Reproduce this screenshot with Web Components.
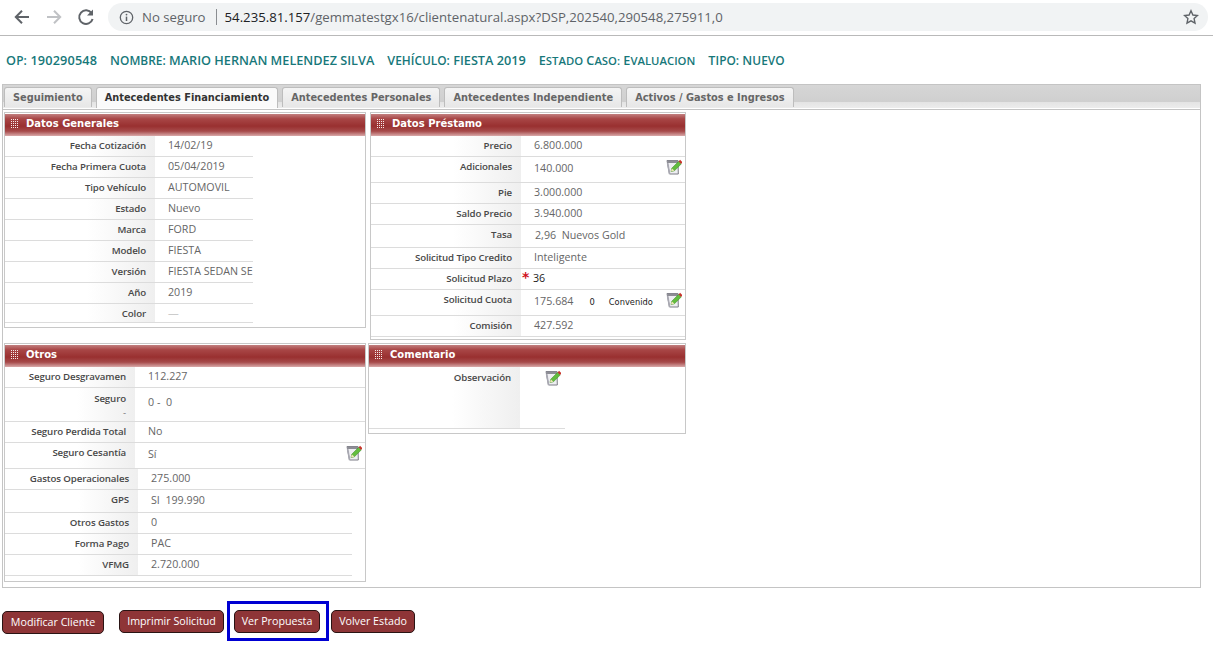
<!DOCTYPE html>
<html>
<head>
<meta charset="utf-8">
<title>Cliente natural</title>
<style>
  html, body { margin: 0; background: #fff; }
  body { font-family: "Open Sans", "Liberation Sans", sans-serif; }
</style>
</head>
<body>
<browser-bar></browser-bar>
<case-header></case-header>
<tab-box>
  <tab-item>Seguimiento</tab-item>
  <tab-item active>Antecedentes Financiamiento</tab-item>
  <tab-item>Antecedentes Personales</tab-item>
  <tab-item>Antecedentes Independiente</tab-item>
  <tab-item>Activos / Gastos e Ingresos</tab-item>

  <data-panel slot="panels" heading="Datos Generales" style="width:362px;height:216px;--label-w:150px;--line-w:248px">
    <data-row label="Fecha Cotización">14/02/19</data-row>
    <data-row label="Fecha Primera Cuota">05/04/2019</data-row>
    <data-row label="Tipo Vehículo">AUTOMOVIL</data-row>
    <data-row label="Estado">Nuevo</data-row>
    <data-row label="Marca">FORD</data-row>
    <data-row label="Modelo">FIESTA</data-row>
    <data-row label="Versión">FIESTA SEDAN SE</data-row>
    <data-row label="Año">2019</data-row>
    <data-row label="Color" h="19"><span style="color:#ccc">—</span></data-row>
  </data-panel>

  <data-panel slot="panels" heading="Datos Préstamo" style="width:316px;height:228px;--label-w:150px">
    <data-row label="Precio">6.800.000</data-row>
    <data-row label="Adicionales" h="26" edit>140.000</data-row>
    <data-row label="Pie">3.000.000</data-row>
    <data-row label="Saldo Precio">3.940.000</data-row>
    <data-row label="Tasa" h="23"><span style="margin-left:1px;white-space:pre">2,96  Nuevos Gold</span></data-row>
    <data-row label="Solicitud Tipo Credito">Inteligente</data-row>
    <data-row label="Solicitud Plazo" required><span style="color:#222;margin-left:-1px">36</span></data-row>
    <data-row label="Solicitud Cuota" h="26" edit>175.684 <small-note style="margin-left:16px">0</small-note><small-note style="margin-left:14px">Convenido</small-note></data-row>
    <data-row label="Comisión">427.592</data-row>
  </data-panel>

  <data-panel slot="panels" heading="Otros" style="width:362px;height:239px;--label-w:130px">
    <data-row label="Seguro Desgravamen">112.227</data-row>
    <data-row label="Seguro" sub="-" h="34" style="--label-top:4px">0 -&nbsp; 0</data-row>
    <data-row label="Seguro Perdida Total">No</data-row>
    <data-row label="Seguro Cesantía" h="26" edit>Sí</data-row>
    <data-row label="Gastos Operacionales" style="--label-w:133px;--line-w:347px">275.000</data-row>
    <data-row label="GPS" h="23" style="--label-w:133px;--line-w:347px">SI&nbsp; 199.990</data-row>
    <data-row label="Otros Gastos" style="--label-w:133px;--line-w:347px">0</data-row>
    <data-row label="Forma Pago" style="--label-w:133px;--line-w:347px">PAC</data-row>
    <data-row label="VFMG" style="--label-w:133px;--line-w:347px">2.720.000</data-row>
  </data-panel>

  <data-panel slot="panels" heading="Comentario" style="width:318px;height:91px;margin-left:-2px;--label-w:151px;--line-w:196px">
    <data-row label="Observación" h="62" top style="--label-top:4px"><edit-icon style="margin-left:12px;margin-top:1px"></edit-icon></data-row>
  </data-panel>
</tab-box>
<action-bar>
  <action-button style="margin-top:1px;width:102px">Modificar Cliente</action-button>
  <action-button style="margin-left:15px;width:105px">Imprimir Solicitud</action-button>
  <marked-box><action-button style="width:86px">Ver Propuesta</action-button></marked-box>
  <action-button style="margin-left:2px;width:84px">Volver Estado</action-button>
</action-bar>

<script>
class BrowserBar extends HTMLElement {
  constructor() {
    super();
    this.attachShadow({ mode: "open" });
    this.shadowRoot.innerHTML = `
      <style>
        :host { display: flex; align-items: center; box-sizing: border-box; height: 36px; padding: 0 5px 1px 12px; border-bottom: 1px solid #b9b9b9; background: #fff; font-family: "Open Sans", sans-serif; }
        .nav { display: flex; gap: 12px; margin-right: 12px; }
        .nav svg { display: block; width: 20px; height: 20px; }
        .omni { flex: 1; display: flex; align-items: center; height: 28px; border-radius: 14px; background: #f1f3f4; padding: 0 9px 0 11px; font-size: 13.2px; color: #5f6368; white-space: nowrap; }
        .omni .sep { width: 1px; height: 16px; background: #8a8d91; margin: 0 8px 0 10px; }
        .omni b { font-weight: 400; color: #202124; }
        .info { width: 15px; height: 15px; margin-right: 8px; }
        .url { flex: 1; }
        .star { width: 16px; height: 16px; }
      </style>
      <div class="nav">
        <svg viewBox="0 0 20 20"><path d="M17 10H4.5M10 3.8L3.8 10l6.2 6.2" fill="none" stroke="#5f6368" stroke-width="2"/></svg>
        <svg viewBox="0 0 20 20"><path d="M3 10h12.5M10 3.8l6.2 6.2-6.2 6.2" fill="none" stroke="#c0c2c5" stroke-width="2"/></svg>
        <svg viewBox="0 0 20 20"><path d="M15.6 6.2A6.8 6.8 0 1 0 16.6 12" fill="none" stroke="#5f6368" stroke-width="2"/><path d="M17 2.6v6h-6z" fill="#5f6368"/></svg>
      </div>
      <div class="omni">
        <svg class="info" viewBox="0 0 15 15"><circle cx="7.5" cy="7.5" r="6.2" fill="none" stroke="#5f6368" stroke-width="1.3"/><path d="M7.5 6.6v4.4" stroke="#5f6368" stroke-width="1.5"/><circle cx="7.5" cy="4.6" r=".9" fill="#5f6368"/></svg>
        <span>No seguro</span><span class="sep"></span>
        <span class="url"><b>54.235.81.157</b>/gemmatestgx16/clientenatural.aspx?DSP,202540,290548,275911,0</span>
        <svg class="star" viewBox="0 0 16 16"><path d="M8 1.8l1.9 4.2 4.6.5-3.4 3.1.9 4.5L8 11.8l-4 2.3.9-4.5L1.5 6.5l4.6-.5z" fill="none" stroke="#5f6368" stroke-width="1.4"/></svg>
      </div>`;
  }
}

class CaseHeader extends HTMLElement {
  constructor() {
    super();
    this.attachShadow({ mode: "open" });
    this.shadowRoot.innerHTML = `
      <style>
        :host { display: flex; gap: 13px; align-items: center; height: 48px; padding-left: 6px; color: #17787a; font: 600 12.7px "Open Sans", sans-serif; white-space: nowrap; }
        small { font-size: 11.9px; }
        .tight small { font-size: 11.3px; }
      </style>
      <span style="letter-spacing:.15px">O<small>P:</small> 190290548</span>
      <span>N<small>OMBRE:</small> MARIO HERNAN MELENDEZ SILVA</span>
      <span>V<small>EHÍCULO:</small> FIESTA 2019</span>
      <span class="tight">E<small>STADO</small> C<small>ASO:</small> E<small>VALUACION</small></span>
      <span>T<small>IPO:</small> N<small>UEVO</small></span>`;
  }
}

class TabBox extends HTMLElement {
  constructor() {
    super();
    this.attachShadow({ mode: "open" });
    this.shadowRoot.innerHTML = `
      <style>
        :host { display: block; box-sizing: border-box; width: 1199px; height: 504px; margin-left: 2px; border: 1px solid #c4c4c4; border-top: 0; background: #fff; }
        .tabs { display: flex; gap: 4px; box-sizing: border-box; height: 24px; padding: 2px 0 0 1px; background: linear-gradient(#d6d6d6, #cfcfcf 75%, #e4e4e4 76%, #ececec); border-top: 1px solid #c4c4c4; }
        .panels { display: grid; grid-template-columns: 362px 316px; column-gap: 4px; row-gap: 3px; align-items: start; justify-content: start; padding: 2px 0 0 1px; }
        .frame { margin: 1px 0 0 0; height: 478px; border-top: 1px solid #c4c4c4; }
      </style>
      <div class="tabs"><slot></slot></div>
      <div class="frame"><div class="panels"><slot name="panels"></slot></div></div>`;
  }
}

class TabItem extends HTMLElement {
  constructor() {
    super();
    this.attachShadow({ mode: "open" });
    this.shadowRoot.innerHTML = `
      <style>
        :host { display: block; box-sizing: border-box; height: 20px; padding: 0 8px; border: 1px solid #bdbdbd; border-bottom: 0; border-radius: 3px 3px 0 0; background: linear-gradient(#f4f4f4, #e7e7e7); color: #666; font: bold 9.8px/19px "DejaVu Sans", Verdana, sans-serif; white-space: nowrap; }
        :host([active]) { height: 21px; background: #fafafa; color: #333; }
      </style>
      <slot></slot>`;
  }
}

class DataPanel extends HTMLElement {
  constructor() {
    super();
    this.attachShadow({ mode: "open" });
    this.shadowRoot.innerHTML = `
      <style>
        :host { display: block; box-sizing: border-box; padding: 1px 0 0; border: 1px solid #c8c8c8; background: #fff; overflow: hidden; }
        .title { display: flex; align-items: center; gap: 8px; box-sizing: border-box; height: 22px; padding: 0 0 3px 5px; background: linear-gradient(#c27f7f 0, #a84646 22%, #993030 55%, #a64a4a 78%, #d9a9a9 100%); color: #fff; font: bold 10px "DejaVu Sans", Verdana, sans-serif; }
        .grip { width: 8px; height: 9px; background: conic-gradient(#f6eaea 25%, transparent 0) 0 0 / 2px 2px; }
      </style>
      <div class="title"><span class="grip"></span><span id="t"></span></div>
      <slot></slot>`;
  }
  connectedCallback() {
    this.shadowRoot.getElementById("t").textContent = this.getAttribute("heading");
  }
}

class DataRow extends HTMLElement {
  constructor() {
    super();
    this.attachShadow({ mode: "open" });
    this.shadowRoot.innerHTML = `
      <style>
        :host { display: flex; position: relative; box-sizing: border-box; height: 21px; width: var(--line-w, 100%); border-bottom: 1px solid #dcdcdc; font: 9.7px "Open Sans", sans-serif; }
        .label { flex: none; box-sizing: border-box; width: var(--label-w, 150px); padding: var(--label-top, 3px) 9px 0 0; text-align: right; font-weight: 600; letter-spacing: -.12px; color: #484848; background: linear-gradient(90deg, #fff 55%, #efefef); line-height: 14px; white-space: nowrap; }
        .sub { display: block; color: #777; font-weight: 400; line-height: 12px; margin-top: 1px; }
        .value { flex: 1; padding: var(--value-top, 2px) 0 0 13px; font-size: 10.7px; line-height: 15px; color: #666; white-space: nowrap; display: flex; align-items: baseline; }
        .req { position: absolute; left: calc(var(--label-w) + 1px); top: 0; color: #d01020; font: bold 14px/16px "DejaVu Sans", sans-serif; }
        edit-icon { position: absolute; right: 3px; top: 2px; }
      </style>
      <div class="label"><span id="l"></span><span class="sub" id="s"></span></div>
      <div class="value"><slot></slot></div>`;
  }
  connectedCallback() {
    const root = this.shadowRoot;
    root.getElementById("l").textContent = this.getAttribute("label");
    const sub = this.getAttribute("sub");
    if (sub) root.getElementById("s").textContent = sub;
    else root.getElementById("s").remove();
    const h = this.getAttribute("h");
    if (h) {
      this.style.height = h + "px";
      // taller rows keep their label on top but push the value down a bit
      if (+h > 21 && !this.hasAttribute("top")) {
        this.style.setProperty("--value-top", Math.round(2 + (h - 21) * 0.4) + "px");
      }
    }
    if (this.hasAttribute("edit")) root.appendChild(document.createElement("edit-icon"));
    if (this.hasAttribute("required")) {
      const star = document.createElement("span");
      star.className = "req";
      star.textContent = "*";
      root.appendChild(star);
    }
  }
}

class EditIcon extends HTMLElement {
  constructor() {
    super();
    this.attachShadow({ mode: "open" });
    this.shadowRoot.innerHTML = `
      <style>:host { display: block; width: 16px; height: 16px; } svg { display: block; }</style>
      <svg width="16" height="16" viewBox="0 0 16 16">
        <path d="M1 1.5h11l.3 13.5H3.5z" fill="#eeeef2" stroke="#7d7d86" stroke-width="1"/>
        <path d="M1 1.5h11v2.6H1.6z" fill="#8d8d95"/>
        <path d="M1.6 4l2 11" stroke="#a9a9b2" stroke-width="1.6"/>
        <path d="M5 12.6l.8-3.4L12.6 2.4l2.6 2.6-6.8 6.8z" fill="#62bd3e" stroke="#3f9128" stroke-width=".6"/>
        <path d="M5 12.6l.8-3.4 2.6 2.6z" fill="#f0e4b8"/>
        <path d="M12.6 2.4l1.5-1.6 2.2 2.2-1.1 2z" fill="#c8342c"/>
      </svg>`;
  }
}

class SmallNote extends HTMLElement {
  constructor() {
    super();
    this.attachShadow({ mode: "open" });
    this.shadowRoot.innerHTML = `
      <style>:host { display: inline-block; color: #222; font: 8.3px "DejaVu Sans", sans-serif; }</style>
      <slot></slot>`;
  }
}

class ActionBar extends HTMLElement {
  constructor() {
    super();
    this.attachShadow({ mode: "open" });
    this.shadowRoot.innerHTML = `
      <style>:host { display: flex; align-items: flex-start; padding: 22px 0 0 2px; }</style>
      <slot></slot>`;
  }
}

class MarkedBox extends HTMLElement {
  constructor() {
    super();
    this.attachShadow({ mode: "open" });
    this.shadowRoot.innerHTML = `
      <style>:host { display: block; box-sizing: border-box; margin: -9px 0 0 3px; padding: 6px 6px 5px 4px; border: 3px solid #0000d2; height: 40px; width: 102px; }</style>
      <slot></slot>`;
  }
}

class ActionButton extends HTMLElement {
  constructor() {
    super();
    this.attachShadow({ mode: "open" });
    this.shadowRoot.innerHTML = `
      <style>
        :host { display: block; flex: none; box-sizing: border-box; height: 23px; border: 1px solid #2a1414; border-radius: 5px; background: #8e3537; color: #fff; font: 10.7px/20px "Open Sans", sans-serif; text-align: center; white-space: nowrap; }
      </style>
      <slot></slot>`;
  }
}

customElements.define("browser-bar", BrowserBar);
customElements.define("case-header", CaseHeader);
customElements.define("tab-box", TabBox);
customElements.define("tab-item", TabItem);
customElements.define("data-panel", DataPanel);
customElements.define("data-row", DataRow);
customElements.define("edit-icon", EditIcon);
customElements.define("small-note", SmallNote);
customElements.define("action-bar", ActionBar);
customElements.define("marked-box", MarkedBox);
customElements.define("action-button", ActionButton);
</script>
</body>
</html>
